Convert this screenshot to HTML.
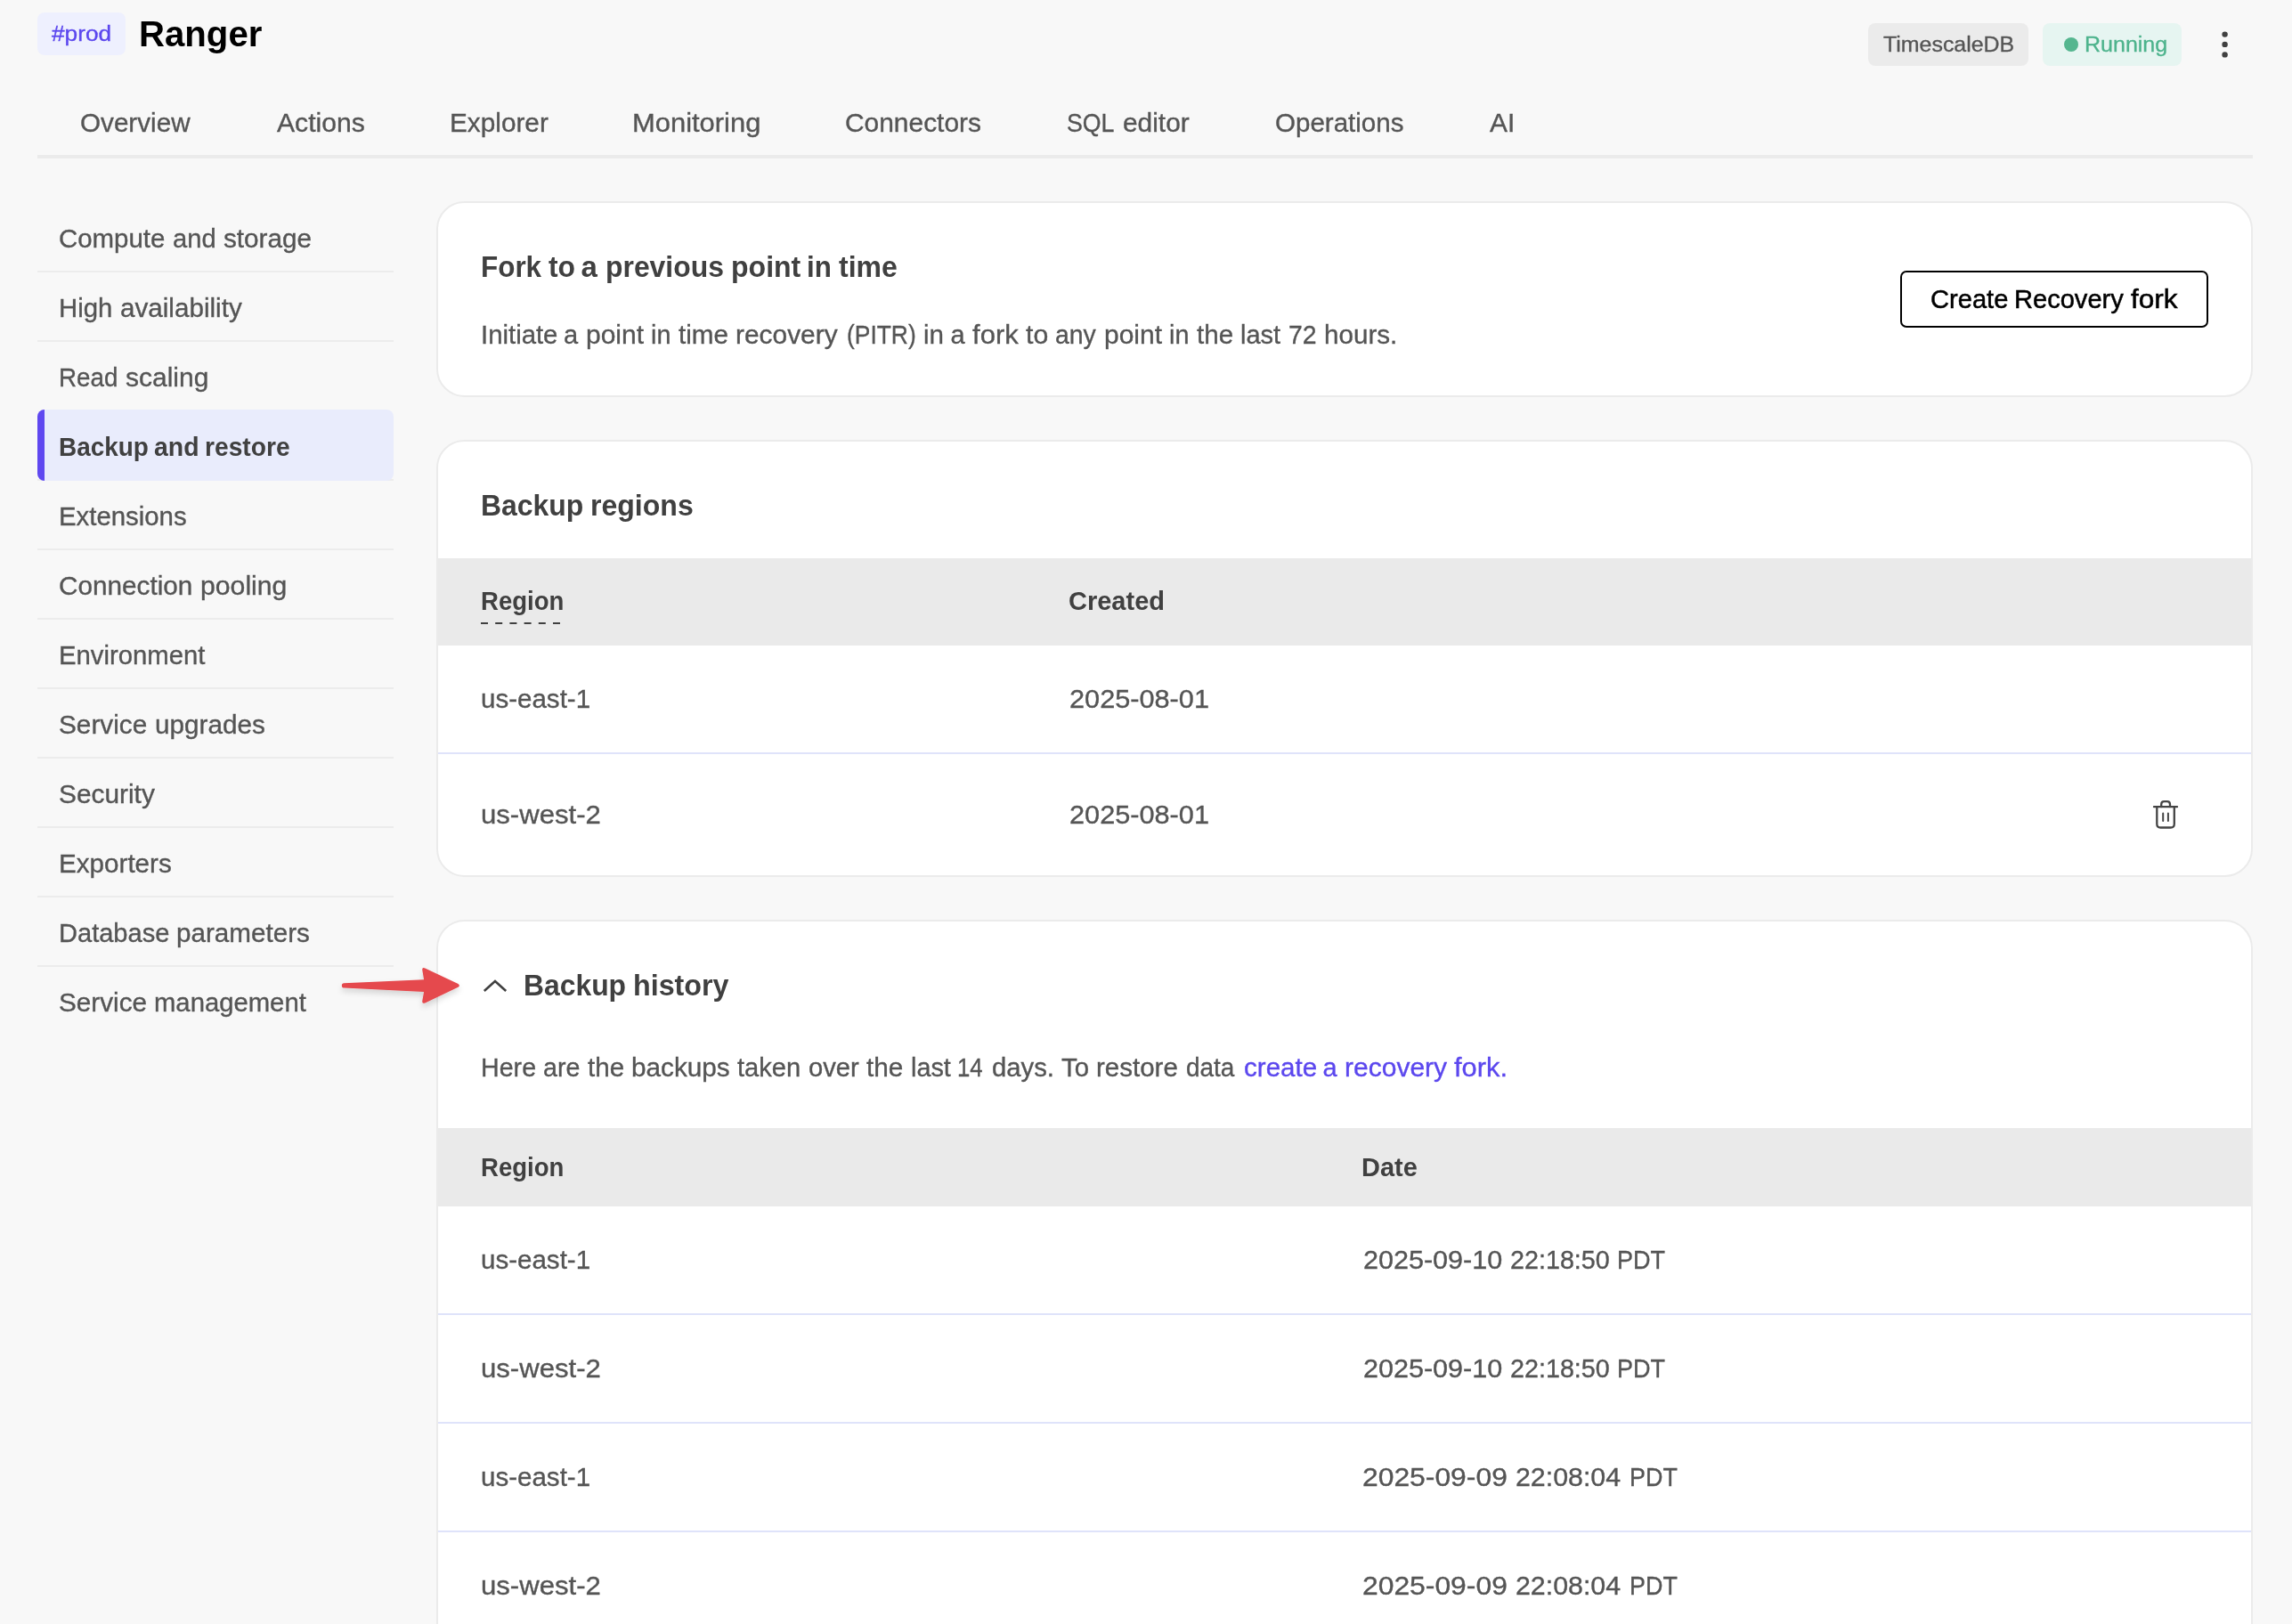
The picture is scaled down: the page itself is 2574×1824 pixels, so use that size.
<!DOCTYPE html>
<html><head><meta charset="utf-8"><title>Ranger - Backup and restore</title>
<style>
html,body{margin:0;padding:0;background:#f8f8f8}
html{overflow:hidden}
body{width:2574px;height:1824px;overflow:hidden;font-family:"Liberation Sans",sans-serif}
#root{position:relative;width:2574px;height:1824px;overflow:hidden;background:#f8f8f8}
.b{position:absolute}
.t{position:absolute;white-space:pre;line-height:1;font-family:"Liberation Sans",sans-serif}
#tx{position:absolute;left:0;top:0;width:2574px;height:1824px;will-change:transform}
.card{background:#fff;border:2px solid #ebebeb;border-radius:31.5px;box-sizing:border-box;overflow:hidden}
</style></head><body><div id="root">
<!-- header badges -->
<div class="b" style="left:42px;top:14px;width:99px;height:48px;background:#eef0fe;border-radius:8px"></div>
<div class="b" style="left:2098px;top:26px;width:180px;height:48px;background:#ebebeb;border-radius:8px"></div>
<div class="b" style="left:2294px;top:26px;width:156px;height:48px;background:#e6f5f1;border-radius:8px"></div>
<div class="b" style="left:2318px;top:42px;width:16px;height:16px;background:#55b68f;border-radius:50%"></div>
<!-- tab line -->
<div class="b" style="left:42px;top:174px;width:2488px;height:4px;background:#ebebeb"></div>
<!-- sidebar dividers -->
<div class="b" style="left:42px;top:304px;width:400px;height:2px;background:#ececec"></div>
<div class="b" style="left:42px;top:382px;width:400px;height:2px;background:#ececec"></div>
<div class="b" style="left:42px;top:538px;width:400px;height:2px;background:#ececec"></div>
<div class="b" style="left:42px;top:616px;width:400px;height:2px;background:#ececec"></div>
<div class="b" style="left:42px;top:694px;width:400px;height:2px;background:#ececec"></div>
<div class="b" style="left:42px;top:772px;width:400px;height:2px;background:#ececec"></div>
<div class="b" style="left:42px;top:850px;width:400px;height:2px;background:#ececec"></div>
<div class="b" style="left:42px;top:928px;width:400px;height:2px;background:#ececec"></div>
<div class="b" style="left:42px;top:1006px;width:400px;height:2px;background:#ececec"></div>
<div class="b" style="left:42px;top:1084px;width:400px;height:2px;background:#ececec"></div>
<!-- active item -->
<div class="b" style="left:42px;top:460px;width:400px;height:80px;background:#e9ecfc;border-radius:8px;overflow:hidden"><div style="width:8px;height:100%;background:#5f48f0"></div></div>
<!-- cards -->
<div class="b card" style="left:490px;top:226px;width:2040px;height:220px"></div>
<div class="b card" style="left:490px;top:494px;width:2040px;height:491px">
  <div class="b" style="left:0;top:131px;width:2036px;height:98px;background:#eaeaea"></div>
  <div class="b" style="left:0;top:349px;width:2036px;height:2px;background:#dfe3fa"></div>
</div>
<div class="b card" style="left:490px;top:1033px;width:2040px;height:791px;border-bottom:0;border-bottom-left-radius:0;border-bottom-right-radius:0">
  <div class="b" style="left:0;top:232px;width:2036px;height:88px;background:#eaeaea"></div>
  <div class="b" style="left:0;top:440px;width:2036px;height:2px;background:#dfe3fa"></div>
  <div class="b" style="left:0;top:562px;width:2036px;height:2px;background:#dfe3fa"></div>
  <div class="b" style="left:0;top:684px;width:2036px;height:2px;background:#dfe3fa"></div>
</div>
<!-- button -->
<div class="b" style="left:2134px;top:304px;width:346px;height:64px;border:2px solid #000;border-radius:7px;box-sizing:border-box;background:#fff"></div>
<!-- dashed underline under Region -->

<!-- svg overlay: arrow, chevron, trash -->
<svg class="b" style="left:0;top:0" width="2574" height="1824" viewBox="0 0 2574 1824">
  <defs><filter id="sh" x="-10%" y="-30%" width="120%" height="180%"><feDropShadow dx="0" dy="4" stdDeviation="3.2" flood-color="#000" flood-opacity="0.15"/></filter></defs>
  <path filter="url(#sh)" d="M386.4 1104.35 L476.1 1100.2 L474.3 1089.7 Q473.8 1085.9 477.4 1087.4 L514.5 1105.1 Q517.2 1106.9 514.5 1108.7 L477.4 1126.4 Q473.8 1127.9 474.3 1124.1 L476.1 1114.1 L386.4 1109.45 A2.55 2.55 0 0 1 386.4 1104.35 Z" fill="#e5484d"/>
  <path d="M543.8 1113 L556 1102 L568.2 1113" fill="none" stroke="#404040" stroke-width="2.6" stroke-linecap="butt" stroke-linejoin="miter"/>
  <path d="M540 700 H630" stroke="#404040" stroke-width="2" stroke-dasharray="8 8.2" fill="none"/>
  <g fill="#404040"><circle cx="2498.6" cy="38.6" r="3.2"/><circle cx="2498.6" cy="49.9" r="3.2"/><circle cx="2498.6" cy="61.4" r="3.2"/></g>
  <g fill="none" stroke="#444" stroke-width="2.3" stroke-linecap="round" stroke-linejoin="round">
    <path d="M2419 906.2 H2445"/>
    <path d="M2427.2 906 V903.5 Q2427.2 900.2 2430.5 900.2 H2433.7 Q2437 900.2 2437 903.5 V906"/>
    <path d="M2422.3 906.5 V925.5 Q2422.3 929.5 2426.3 929.5 H2437.8 Q2441.8 929.5 2441.8 925.5 V906.5"/>
    <path d="M2429.2 913.5 V922 M2434.9 913.5 V922" stroke-width="2"/>
  </g>
</svg>
<div id="tx">
<div class="t" style="left:58.16px;top:26px;font-size:24.7px;font-weight:400;color:#5b47ee;transform-origin:0 0;transform:scaleX(1.0646);-webkit-text-stroke:0.35px #5b47ee;">#prod</div>
<div class="t" style="left:156.25px;top:18px;font-size:41.2px;font-weight:700;color:#000000;transform-origin:0 0;transform:scaleX(0.9749);">Ranger</div>
<div class="t" style="left:90.46px;top:124px;font-size:29.0px;font-weight:400;color:#555555;transform-origin:0 0;transform:scaleX(1.0222);-webkit-text-stroke:0.35px #555555;">Overview</div>
<div class="t" style="left:311.00px;top:124px;font-size:29.0px;font-weight:400;color:#555555;transform-origin:0 0;transform:scaleX(1.0381);-webkit-text-stroke:0.35px #555555;">Actions</div>
<div class="t" style="left:504.76px;top:124px;font-size:29.0px;font-weight:400;color:#555555;transform-origin:0 0;transform:scaleX(1.0263);-webkit-text-stroke:0.35px #555555;">Explorer</div>
<div class="t" style="left:709.87px;top:124px;font-size:29.0px;font-weight:400;color:#555555;transform-origin:0 0;transform:scaleX(1.0660);-webkit-text-stroke:0.35px #555555;">Monitoring</div>
<div class="t" style="left:949.17px;top:124px;font-size:29.0px;font-weight:400;color:#555555;transform-origin:0 0;transform:scaleX(1.0313);-webkit-text-stroke:0.35px #555555;">Connectors</div>
<div class="t" style="left:1198.15px;top:124px;font-size:29.0px;font-weight:400;color:#555555;transform-origin:0 0;transform:scaleX(0.9217);-webkit-text-stroke:0.35px #555555;">SQL</div>
<div class="t" style="left:1260.81px;top:124px;font-size:29.0px;font-weight:400;color:#555555;transform-origin:0 0;transform:scaleX(1.0300);-webkit-text-stroke:0.35px #555555;">editor</div>
<div class="t" style="left:1432.30px;top:124px;font-size:29.0px;font-weight:400;color:#555555;transform-origin:0 0;transform:scaleX(1.0185);-webkit-text-stroke:0.35px #555555;">Operations</div>
<div class="t" style="left:1673.10px;top:124px;font-size:29.0px;font-weight:400;color:#555555;transform-origin:0 0;transform:scaleX(1.0338);-webkit-text-stroke:0.35px #555555;">AI</div>
<div class="t" style="left:2114.84px;top:38px;font-size:24.7px;font-weight:400;color:#555555;transform-origin:0 0;transform:scaleX(1.0093);-webkit-text-stroke:0.35px #555555;">TimescaleDB</div>
<div class="t" style="left:2341.47px;top:38px;font-size:24.7px;font-weight:400;color:#4db38c;transform-origin:0 0;transform:scaleX(1.0135);-webkit-text-stroke:0.35px #4db38c;">Running</div>
<div class="t" style="left:66.39px;top:254px;font-size:29.0px;font-weight:400;color:#555555;transform-origin:0 0;transform:scaleX(1.0142);-webkit-text-stroke:0.35px #555555;">Compute</div>
<div class="t" style="left:193.53px;top:254px;font-size:29.0px;font-weight:400;color:#555555;transform-origin:0 0;transform:scaleX(1.0045);-webkit-text-stroke:0.35px #555555;">and</div>
<div class="t" style="left:251.03px;top:254px;font-size:29.0px;font-weight:400;color:#555555;transform-origin:0 0;transform:scaleX(1.0242);-webkit-text-stroke:0.35px #555555;">storage</div>
<div class="t" style="left:66.31px;top:332px;font-size:29.0px;font-weight:400;color:#555555;transform-origin:0 0;transform:scaleX(1.0106);-webkit-text-stroke:0.35px #555555;">High</div>
<div class="t" style="left:134.79px;top:332px;font-size:29.0px;font-weight:400;color:#555555;transform-origin:0 0;transform:scaleX(1.0218);-webkit-text-stroke:0.35px #555555;">availability</div>
<div class="t" style="left:66.42px;top:410px;font-size:29.0px;font-weight:400;color:#555555;transform-origin:0 0;transform:scaleX(0.9570);-webkit-text-stroke:0.35px #555555;">Read</div>
<div class="t" style="left:141.39px;top:410px;font-size:29.0px;font-weight:400;color:#555555;transform-origin:0 0;transform:scaleX(1.0344);-webkit-text-stroke:0.35px #555555;">scaling</div>
<div class="t" style="left:66.23px;top:488px;font-size:29.0px;font-weight:700;color:#404040;transform-origin:0 0;transform:scaleX(0.9617);">Backup</div>
<div class="t" style="left:173.20px;top:488px;font-size:29.0px;font-weight:700;color:#404040;transform-origin:0 0;transform:scaleX(0.9797);">and</div>
<div class="t" style="left:230.18px;top:488px;font-size:29.0px;font-weight:700;color:#404040;transform-origin:0 0;transform:scaleX(0.9719);">restore</div>
<div class="t" style="left:66.17px;top:566px;font-size:29.0px;font-weight:400;color:#555555;transform-origin:0 0;transform:scaleX(1.0125);-webkit-text-stroke:0.35px #555555;">Extensions</div>
<div class="t" style="left:66.38px;top:644px;font-size:29.0px;font-weight:400;color:#555555;transform-origin:0 0;transform:scaleX(1.0243);-webkit-text-stroke:0.35px #555555;">Connection</div>
<div class="t" style="left:225.41px;top:644px;font-size:29.0px;font-weight:400;color:#555555;transform-origin:0 0;transform:scaleX(1.0412);-webkit-text-stroke:0.35px #555555;">pooling</div>
<div class="t" style="left:66.18px;top:722px;font-size:29.0px;font-weight:400;color:#555555;transform-origin:0 0;transform:scaleX(1.0097);-webkit-text-stroke:0.35px #555555;">Environment</div>
<div class="t" style="left:66.47px;top:800px;font-size:29.0px;font-weight:400;color:#555555;transform-origin:0 0;transform:scaleX(1.0259);-webkit-text-stroke:0.35px #555555;">Service</div>
<div class="t" style="left:174.20px;top:800px;font-size:29.0px;font-weight:400;color:#555555;transform-origin:0 0;transform:scaleX(1.0247);-webkit-text-stroke:0.35px #555555;">upgrades</div>
<div class="t" style="left:66.47px;top:878px;font-size:29.0px;font-weight:400;color:#555555;transform-origin:0 0;transform:scaleX(1.0292);-webkit-text-stroke:0.35px #555555;">Security</div>
<div class="t" style="left:66.16px;top:956px;font-size:29.0px;font-weight:400;color:#555555;transform-origin:0 0;transform:scaleX(1.0214);-webkit-text-stroke:0.35px #555555;">Exporters</div>
<div class="t" style="left:66.20px;top:1034px;font-size:29.0px;font-weight:400;color:#555555;transform-origin:0 0;transform:scaleX(1.0015);-webkit-text-stroke:0.35px #555555;">Database</div>
<div class="t" style="left:198.26px;top:1034px;font-size:29.0px;font-weight:400;color:#555555;transform-origin:0 0;transform:scaleX(1.0215);-webkit-text-stroke:0.35px #555555;">parameters</div>
<div class="t" style="left:66.48px;top:1112px;font-size:29.0px;font-weight:400;color:#555555;transform-origin:0 0;transform:scaleX(1.0244);-webkit-text-stroke:0.35px #555555;">Service</div>
<div class="t" style="left:173.18px;top:1112px;font-size:29.0px;font-weight:400;color:#555555;transform-origin:0 0;transform:scaleX(1.0090);-webkit-text-stroke:0.35px #555555;">management</div>
<div class="t" style="left:539.68px;top:283px;font-size:33.0px;font-weight:700;color:#404040;transform-origin:0 0;transform:scaleX(0.9521);">Fork</div>
<div class="t" style="left:615.58px;top:283px;font-size:33.0px;font-weight:700;color:#404040;transform-origin:0 0;transform:scaleX(0.9649);">to</div>
<div class="t" style="left:652.49px;top:283px;font-size:33.0px;font-weight:700;color:#404040;letter-spacing:0.000px;">a</div>
<div class="t" style="left:679.88px;top:283px;font-size:33.0px;font-weight:700;color:#404040;transform-origin:0 0;transform:scaleX(0.9661);">previous</div>
<div class="t" style="left:820.77px;top:283px;font-size:33.0px;font-weight:700;color:#404040;transform-origin:0 0;transform:scaleX(0.9710);">point</div>
<div class="t" style="left:906.45px;top:283px;font-size:33.0px;font-weight:700;color:#404040;transform-origin:0 0;transform:scaleX(0.9484);">in</div>
<div class="t" style="left:942.26px;top:283px;font-size:33.0px;font-weight:700;color:#404040;transform-origin:0 0;transform:scaleX(0.9694);">time</div>
<div class="t" style="left:539.98px;top:362px;font-size:29.0px;font-weight:400;color:#555555;transform-origin:0 0;transform:scaleX(1.0117);-webkit-text-stroke:0.35px #555555;">Initiate</div>
<div class="t" style="left:632.89px;top:362px;font-size:29.0px;font-weight:400;color:#555555;letter-spacing:0.000px;-webkit-text-stroke:0.35px #555555;">a</div>
<div class="t" style="left:658.19px;top:362px;font-size:29.0px;font-weight:400;color:#555555;transform-origin:0 0;transform:scaleX(1.0344);-webkit-text-stroke:0.35px #555555;">point</div>
<div class="t" style="left:730.89px;top:362px;font-size:29.0px;font-weight:400;color:#555555;transform-origin:0 0;transform:scaleX(0.9924);-webkit-text-stroke:0.35px #555555;">in</div>
<div class="t" style="left:761.82px;top:362px;font-size:29.0px;font-weight:400;color:#555555;transform-origin:0 0;transform:scaleX(1.0238);-webkit-text-stroke:0.35px #555555;">time</div>
<div class="t" style="left:825.63px;top:362px;font-size:29.0px;font-weight:400;color:#555555;transform-origin:0 0;transform:scaleX(1.0305);-webkit-text-stroke:0.35px #555555;">recovery</div>
<div class="t" style="left:950.85px;top:362px;font-size:29.0px;font-weight:400;color:#555555;transform-origin:0 0;transform:scaleX(0.9102);-webkit-text-stroke:0.35px #555555;">(PITR)</div>
<div class="t" style="left:1037.35px;top:362px;font-size:29.0px;font-weight:400;color:#555555;transform-origin:0 0;transform:scaleX(1.0176);-webkit-text-stroke:0.35px #555555;">in</div>
<div class="t" style="left:1067.38px;top:362px;font-size:29.0px;font-weight:400;color:#555555;letter-spacing:0.000px;-webkit-text-stroke:0.35px #555555;">a</div>
<div class="t" style="left:1091.81px;top:362px;font-size:29.0px;font-weight:400;color:#555555;transform-origin:0 0;transform:scaleX(1.0708);-webkit-text-stroke:0.35px #555555;">fork</div>
<div class="t" style="left:1151.72px;top:362px;font-size:29.0px;font-weight:400;color:#555555;transform-origin:0 0;transform:scaleX(1.0409);-webkit-text-stroke:0.35px #555555;">to</div>
<div class="t" style="left:1185.00px;top:362px;font-size:29.0px;font-weight:400;color:#555555;transform-origin:0 0;transform:scaleX(0.9796);-webkit-text-stroke:0.35px #555555;">any</div>
<div class="t" style="left:1239.78px;top:362px;font-size:29.0px;font-weight:400;color:#555555;transform-origin:0 0;transform:scaleX(1.0344);-webkit-text-stroke:0.35px #555555;">point</div>
<div class="t" style="left:1313.07px;top:362px;font-size:29.0px;font-weight:400;color:#555555;transform-origin:0 0;transform:scaleX(0.9924);-webkit-text-stroke:0.35px #555555;">in</div>
<div class="t" style="left:1343.90px;top:362px;font-size:29.0px;font-weight:400;color:#555555;transform-origin:0 0;transform:scaleX(1.0200);-webkit-text-stroke:0.35px #555555;">the</div>
<div class="t" style="left:1393.25px;top:362px;font-size:29.0px;font-weight:400;color:#555555;transform-origin:0 0;transform:scaleX(0.9999);-webkit-text-stroke:0.35px #555555;">last</div>
<div class="t" style="left:1447.07px;top:362px;font-size:29.0px;font-weight:400;color:#555555;transform-origin:0 0;transform:scaleX(0.9789);-webkit-text-stroke:0.35px #555555;">72</div>
<div class="t" style="left:1487.15px;top:362px;font-size:29.0px;font-weight:400;color:#555555;transform-origin:0 0;transform:scaleX(1.0218);-webkit-text-stroke:0.35px #555555;">hours.</div>
<div class="t" style="left:2167.50px;top:322px;font-size:29.0px;font-weight:400;color:#000000;transform-origin:0 0;transform:scaleX(1.0032);-webkit-text-stroke:0.5px #000;">Create</div>
<div class="t" style="left:2262.24px;top:322px;font-size:29.0px;font-weight:400;color:#000000;transform-origin:0 0;transform:scaleX(1.0025);-webkit-text-stroke:0.5px #000;">Recovery</div>
<div class="t" style="left:2393.38px;top:322px;font-size:29.0px;font-weight:400;color:#000000;transform-origin:0 0;transform:scaleX(1.0879);-webkit-text-stroke:0.5px #000;">fork</div>
<div class="t" style="left:539.67px;top:551px;font-size:33.0px;font-weight:700;color:#404040;transform-origin:0 0;transform:scaleX(0.9675);">Backup</div>
<div class="t" style="left:662.97px;top:551px;font-size:33.0px;font-weight:700;color:#404040;transform-origin:0 0;transform:scaleX(0.9711);">regions</div>
<div class="t" style="left:539.58px;top:661px;font-size:29.0px;font-weight:700;color:#404040;transform-origin:0 0;transform:scaleX(0.9498);">Region</div>
<div class="t" style="left:1200.16px;top:661px;font-size:29.0px;font-weight:700;color:#404040;transform-origin:0 0;transform:scaleX(1.0001);">Created</div>
<div class="t" style="left:540.23px;top:771px;font-size:29.0px;font-weight:400;color:#555555;transform-origin:0 0;transform:scaleX(1.0182);-webkit-text-stroke:0.35px #555555;">us-east-1</div>
<div class="t" style="left:1200.54px;top:771px;font-size:29.0px;font-weight:400;color:#555555;transform-origin:0 0;transform:scaleX(1.0580);-webkit-text-stroke:0.35px #555555;">2025-08-01</div>
<div class="t" style="left:540.11px;top:901px;font-size:29.0px;font-weight:400;color:#555555;transform-origin:0 0;transform:scaleX(1.0726);-webkit-text-stroke:0.35px #555555;">us-west-2</div>
<div class="t" style="left:1200.54px;top:901px;font-size:29.0px;font-weight:400;color:#555555;transform-origin:0 0;transform:scaleX(1.0580);-webkit-text-stroke:0.35px #555555;">2025-08-01</div>
<div class="t" style="left:588.07px;top:1090px;font-size:33.0px;font-weight:700;color:#404040;transform-origin:0 0;transform:scaleX(0.9650);">Backup</div>
<div class="t" style="left:711.07px;top:1090px;font-size:33.0px;font-weight:700;color:#404040;transform-origin:0 0;transform:scaleX(0.9773);">history</div>
<div class="t" style="left:540.01px;top:1185px;font-size:29.0px;font-weight:400;color:#555555;transform-origin:0 0;transform:scaleX(0.9876);-webkit-text-stroke:0.35px #555555;">Here</div>
<div class="t" style="left:610.46px;top:1185px;font-size:29.0px;font-weight:400;color:#555555;transform-origin:0 0;transform:scaleX(0.9883);-webkit-text-stroke:0.35px #555555;">are</div>
<div class="t" style="left:659.58px;top:1185px;font-size:29.0px;font-weight:400;color:#555555;transform-origin:0 0;transform:scaleX(1.0197);-webkit-text-stroke:0.35px #555555;">the</div>
<div class="t" style="left:709.37px;top:1185px;font-size:29.0px;font-weight:400;color:#555555;transform-origin:0 0;transform:scaleX(1.0252);-webkit-text-stroke:0.35px #555555;">backups</div>
<div class="t" style="left:828.43px;top:1185px;font-size:29.0px;font-weight:400;color:#555555;transform-origin:0 0;transform:scaleX(1.0048);-webkit-text-stroke:0.35px #555555;">taken</div>
<div class="t" style="left:908.25px;top:1185px;font-size:29.0px;font-weight:400;color:#555555;transform-origin:0 0;transform:scaleX(1.0056);-webkit-text-stroke:0.35px #555555;">over</div>
<div class="t" style="left:973.24px;top:1185px;font-size:29.0px;font-weight:400;color:#555555;transform-origin:0 0;transform:scaleX(1.0250);-webkit-text-stroke:0.35px #555555;">the</div>
<div class="t" style="left:1022.83px;top:1185px;font-size:29.0px;font-weight:400;color:#555555;transform-origin:0 0;transform:scaleX(0.9930);-webkit-text-stroke:0.35px #555555;">last</div>
<div class="t" style="left:1075.40px;top:1185px;font-size:29.0px;font-weight:400;color:#555555;transform-origin:0 0;transform:scaleX(0.8878);-webkit-text-stroke:0.35px #555555;">14</div>
<div class="t" style="left:1113.84px;top:1185px;font-size:29.0px;font-weight:400;color:#555555;transform-origin:0 0;transform:scaleX(1.0085);-webkit-text-stroke:0.35px #555555;">days.</div>
<div class="t" style="left:1192.35px;top:1185px;font-size:29.0px;font-weight:400;color:#555555;transform-origin:0 0;transform:scaleX(1.0103);-webkit-text-stroke:0.35px #555555;">To</div>
<div class="t" style="left:1231.32px;top:1185px;font-size:29.0px;font-weight:400;color:#555555;transform-origin:0 0;transform:scaleX(1.0170);-webkit-text-stroke:0.35px #555555;">restore</div>
<div class="t" style="left:1331.78px;top:1185px;font-size:29.0px;font-weight:400;color:#555555;transform-origin:0 0;transform:scaleX(0.9630);-webkit-text-stroke:0.35px #555555;">data</div>
<div class="t" style="left:1396.56px;top:1185px;font-size:29.0px;font-weight:400;color:#5b47ee;transform-origin:0 0;transform:scaleX(1.0199);-webkit-text-stroke:0.35px #5b47ee;">create</div>
<div class="t" style="left:1485.42px;top:1185px;font-size:29.0px;font-weight:400;color:#5b47ee;letter-spacing:0.000px;-webkit-text-stroke:0.35px #5b47ee;">a</div>
<div class="t" style="left:1509.91px;top:1185px;font-size:29.0px;font-weight:400;color:#5b47ee;transform-origin:0 0;transform:scaleX(1.0351);-webkit-text-stroke:0.35px #5b47ee;">recovery</div>
<div class="t" style="left:1633.14px;top:1185px;font-size:29.0px;font-weight:400;color:#5b47ee;transform-origin:0 0;transform:scaleX(1.0647);-webkit-text-stroke:0.35px #5b47ee;">fork.</div>
<div class="t" style="left:539.58px;top:1297px;font-size:29.0px;font-weight:700;color:#404040;transform-origin:0 0;transform:scaleX(0.9498);">Region</div>
<div class="t" style="left:1529.33px;top:1297px;font-size:29.0px;font-weight:700;color:#404040;transform-origin:0 0;transform:scaleX(0.9986);">Date</div>
<div class="t" style="left:540.23px;top:1401px;font-size:29.0px;font-weight:400;color:#555555;transform-origin:0 0;transform:scaleX(1.0182);-webkit-text-stroke:0.35px #555555;">us-east-1</div>
<div class="t" style="left:1530.74px;top:1401px;font-size:29.0px;font-weight:400;color:#555555;transform-origin:0 0;transform:scaleX(1.0533);-webkit-text-stroke:0.35px #555555;">2025-09-10</div>
<div class="t" style="left:1696.08px;top:1401px;font-size:29.0px;font-weight:400;color:#555555;transform-origin:0 0;transform:scaleX(0.9900);-webkit-text-stroke:0.35px #555555;">22:18:50</div>
<div class="t" style="left:1816.10px;top:1401px;font-size:29.0px;font-weight:400;color:#555555;transform-origin:0 0;transform:scaleX(0.9315);-webkit-text-stroke:0.35px #555555;">PDT</div>
<div class="t" style="left:540.11px;top:1523px;font-size:29.0px;font-weight:400;color:#555555;transform-origin:0 0;transform:scaleX(1.0726);-webkit-text-stroke:0.35px #555555;">us-west-2</div>
<div class="t" style="left:1530.74px;top:1523px;font-size:29.0px;font-weight:400;color:#555555;transform-origin:0 0;transform:scaleX(1.0533);-webkit-text-stroke:0.35px #555555;">2025-09-10</div>
<div class="t" style="left:1696.08px;top:1523px;font-size:29.0px;font-weight:400;color:#555555;transform-origin:0 0;transform:scaleX(0.9900);-webkit-text-stroke:0.35px #555555;">22:18:50</div>
<div class="t" style="left:1816.10px;top:1523px;font-size:29.0px;font-weight:400;color:#555555;transform-origin:0 0;transform:scaleX(0.9315);-webkit-text-stroke:0.35px #555555;">PDT</div>
<div class="t" style="left:540.23px;top:1645px;font-size:29.0px;font-weight:400;color:#555555;transform-origin:0 0;transform:scaleX(1.0182);-webkit-text-stroke:0.35px #555555;">us-east-1</div>
<div class="t" style="left:1530.40px;top:1645px;font-size:29.0px;font-weight:400;color:#555555;transform-origin:0 0;transform:scaleX(1.0977);-webkit-text-stroke:0.35px #555555;">2025-09-09</div>
<div class="t" style="left:1702.14px;top:1645px;font-size:29.0px;font-weight:400;color:#555555;transform-origin:0 0;transform:scaleX(1.0462);-webkit-text-stroke:0.35px #555555;">22:08:04</div>
<div class="t" style="left:1829.59px;top:1645px;font-size:29.0px;font-weight:400;color:#555555;transform-origin:0 0;transform:scaleX(0.9281);-webkit-text-stroke:0.35px #555555;">PDT</div>
<div class="t" style="left:540.11px;top:1767px;font-size:29.0px;font-weight:400;color:#555555;transform-origin:0 0;transform:scaleX(1.0726);-webkit-text-stroke:0.35px #555555;">us-west-2</div>
<div class="t" style="left:1530.40px;top:1767px;font-size:29.0px;font-weight:400;color:#555555;transform-origin:0 0;transform:scaleX(1.0977);-webkit-text-stroke:0.35px #555555;">2025-09-09</div>
<div class="t" style="left:1702.14px;top:1767px;font-size:29.0px;font-weight:400;color:#555555;transform-origin:0 0;transform:scaleX(1.0462);-webkit-text-stroke:0.35px #555555;">22:08:04</div>
<div class="t" style="left:1829.59px;top:1767px;font-size:29.0px;font-weight:400;color:#555555;transform-origin:0 0;transform:scaleX(0.9281);-webkit-text-stroke:0.35px #555555;">PDT</div>
</div>
</div></body></html>
